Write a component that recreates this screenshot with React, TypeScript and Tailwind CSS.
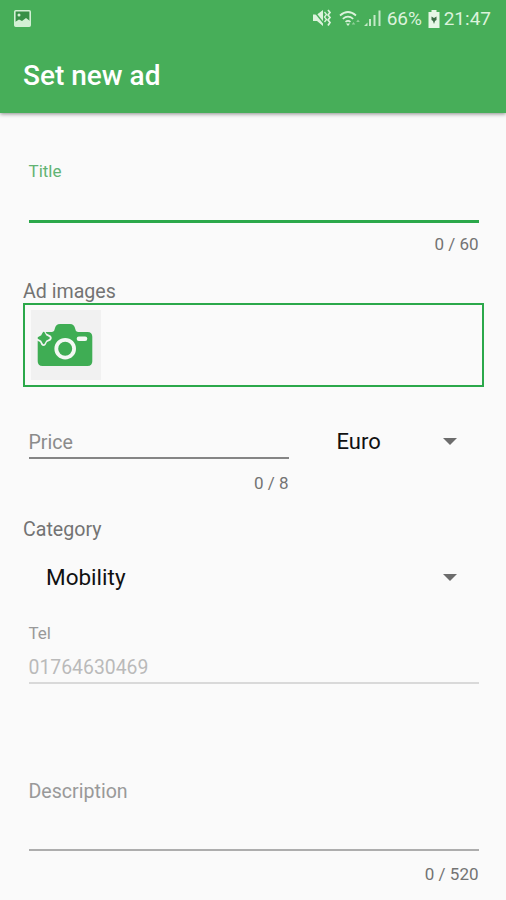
import React from "react";

function StatusIcons() {
  return (
    <svg width="72" height="22" viewBox="312 8 72 22" fill="#dcf3dc">
      <path d="M314 14.500h4l6-4.500v16l-6-5h-4z" />
      <path d="M314.500 10.500l12 15" stroke="#47ae59" strokeWidth="1.300" />
      <path d="M325.500 12l2 2.500-2 2.500 2 2.500-2 2.500" fill="none" stroke="#dcf3dc" strokeWidth="1.300" />
      <path d="M329 10l2 2.500-2 2.500 2 2.500-2 2.500 2 2.500-2 3" fill="none" stroke="#dcf3dc" strokeWidth="1.700" />
      <g fill="none" stroke="#dcf3dc" strokeWidth="1.700">
        <path d="M341 15.500q8-7 16 0" />
        <path d="M343.800 18.800q5.200-4.300 10.400 0" />
        <path d="M346.500 21.800q2.500-2 5 0" />
      </g>
      <path d="M349 26l-2-2.500h4z" />
      <path d="M354.500 22l1.800 2.500h-3.600zM359 19.500l1.800 2.500h-3.600z" opacity=".5" />
      <path d="M365 26l3.500-3.500V26zM370 19h2v7h-2zM374.500 15h2v11h-2zM379.500 10.500h2V26h-2z" opacity=".85" />
    </svg>
  );
}

function Battery() {
  return (
    <svg width="12" height="18" viewBox="0 0 12 18">
      <path d="M3.500 0h5v2H11.500v16H.5V2h3z" fill="#e6f7e6" />
      <path d="M3.500 6.500l2.500 1.500L8.500 6.500v3.500l-1.500 1-1 3-1-3-1.500-1z" fill="#3c6e46" />
    </svg>
  );
}

function Camera() {
  return (
    <svg width="70" height="70" viewBox="31 310 70 70">
      <path
        d="M41 332h10.500c2 0 2.700-.8 3.200-3 .8-3.500 2.300-5 5.300-5h10c3 0 4.500 1.500 5.300 5 .5 2.200 1.200 3 3.200 3h9q4.800 0 4.800 4.800v24.400q0 4.800-4.800 4.800H42.500q-4.800 0-4.800-4.800V336z"
        fill="#3fad54"
      />
      <circle cx="65.200" cy="348.700" r="8.900" fill="#3fad54" stroke="#f4f8f4" strokeWidth="3.800" />
      <rect x="76.700" y="336.500" width="10.600" height="4.500" rx="2.200" fill="#f4f8f4" />
      <path d="M36 330h8.500l2 3.500 4 2q2.500 2.500 0 5l-3.500 1.500-1.500 3q-2 2-4 0l-1.500-3-4-2z" fill="#f2f4f2" />
      <path d="M43.700 333l1.800 3.200 3.200 1.800-3.200 1.800-1.800 3.200-1.800-3.200-3.200-1.800 3.200-1.800z" fill="#3fad54" stroke="#3fad54" strokeWidth="2.200" strokeLinejoin="round" />
    </svg>
  );
}

function Arrow() {
  return <div className="h-0 w-0 border-x-[7px] border-t-[7px] border-x-transparent border-t-[#6c6c6c]" />;
}

export default function App() {
  return (
    <div className="h-[900px] w-[506px] overflow-hidden bg-[#fafafa] font-['Roboto',sans-serif] text-[#737373]">
      <header className="h-[113px] bg-[#47ae59] shadow-[0_1px_4px_rgba(0,0,0,0.45)]">
        <div className="flex h-[37px] items-center pl-3.5 pr-[15px] text-[#dcf3dc]">
          <svg width="17" height="17" viewBox="0 0 17 17">
            <rect x=".8" y=".8" width="15.400" height="15.400" rx="1" fill="#389047" stroke="#d3f0d5" strokeWidth="1.600" />
            <path d="M1 12l4-2.500 3 1.500 4-3 4 3v5H1z" fill="#d3f0d5" />
            <circle cx="5" cy="5" r="1.500" fill="#d3f0d5" />
          </svg>
          <div className="ml-auto flex items-center">
            <StatusIcons />
            <span className="ml-1 w-[35px] whitespace-nowrap text-[19px] leading-5">66%</span>
            <span className="ml-1.5 mr-1"><Battery /></span>
            <span className="whitespace-nowrap text-[19px] leading-5">21:47</span>
          </div>
        </div>
        <h1 className="pl-[23px] pt-[23px] text-[28px] font-medium leading-8 text-white">Set new ad</h1>
      </header>

      <main className="pl-[23px] pr-[22px] pt-[47px]">
        <section className="px-[5.500px]">
          <label className="block h-[60px] text-[17px] leading-[22px] text-[#62b373]">Title</label>
          <div className="h-[2.500px] bg-[#2ba84a]" />
          <p className="pt-[11.500px] text-right text-[17px] leading-5">0 / 60</p>
        </section>

        <h2 className="h-[49px] pt-[26px] text-[19.600px] leading-6">Ad images</h2>
        <div className="h-[84px] border-[2.500px] border-[#2ba84a] pl-[6px] pt-[5px]">
          <div className="h-[70px] w-[70px] bg-[#f1f1f1]"><Camera /></div>
        </div>

        <div className="flex pl-[5.500px] pt-[42px]">
          <div className="w-[260px]">
            <p className="h-7 pt-0.5 text-[19.600px] leading-6 text-[#8b8b8b]">Price</p>
            <div className="h-[1.500px] bg-[#858585]" />
            <p className="pt-3.5 text-right text-[17px] leading-5">0 / 8</p>
          </div>
          <div className="ml-12 flex h-6 w-[120px] items-center justify-between text-[22px] text-[#111]">
            <span>Euro</span><Arrow />
          </div>
        </div>

        <h2 className="h-12 pt-[25px] text-[19.600px] leading-6">Category</h2>
        <div className="mt-[25px] flex h-6 items-center justify-between pl-[23px] pr-[27px] text-[22.500px] text-[#111]">
          <span>Mobility</span><Arrow />
        </div>

        <section className="px-[5.500px] pt-[32px]">
          <p className="text-[17px] leading-[22px] text-[#999]">Tel</p>
          <p className="mt-3 h-[26px] text-[19.400px] leading-6 text-[#bababa]">01764630469</p>
          <div className="h-0.5 bg-[#d9d9d9]" />
        </section>

        <section className="px-[5.500px] pt-24">
          <p className="h-[69px] text-[19.600px] leading-6 text-[#999]">Description</p>
          <div className="h-0.5 bg-[#adadad]" />
          <p className="pt-[13px] text-right text-[17px] leading-5">0 / 520</p>
        </section>
      </main>
    </div>
  );
}
